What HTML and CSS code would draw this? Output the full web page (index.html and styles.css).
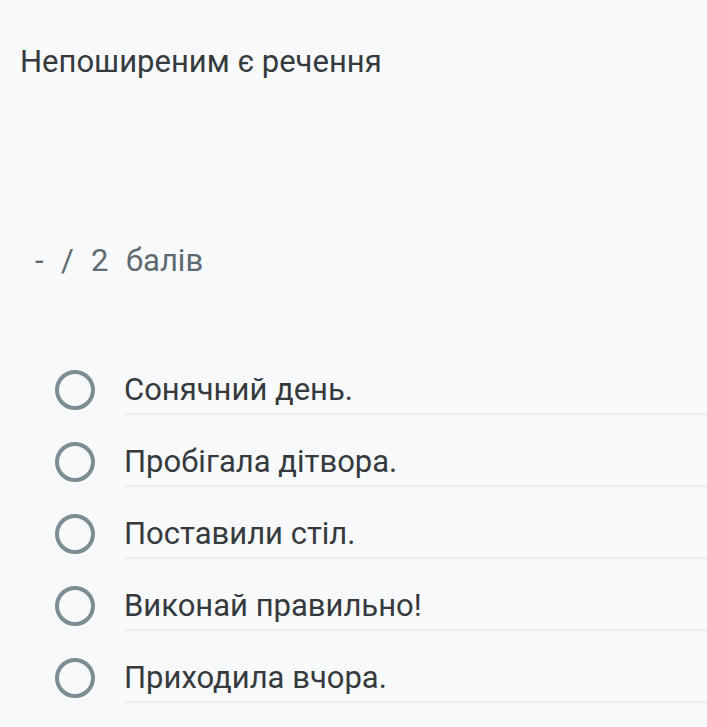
FILE: index.html
```html
<!DOCTYPE html>
<html lang="uk">
<head>
<meta charset="utf-8">
<link rel="stylesheet" href="styles.css">
</head>
<body>
<div class="page">
  <div class="question">Непоширеним є речення</div>
  <div class="score">-&nbsp; /&nbsp; 2&nbsp; балів</div>
  <ul class="options">
    <li class="option"><span class="radio"></span><span class="label">Сонячний день.</span></li>
    <li class="option"><span class="radio"></span><span class="label">Пробігала дітвора.</span></li>
    <li class="option"><span class="radio"></span><span class="label">Поставили стіл.</span></li>
    <li class="option"><span class="radio"></span><span class="label">Виконай правильно!</span></li>
    <li class="option"><span class="radio"></span><span class="label">Приходила вчора.</span></li>
  </ul>
</div>
</body>
</html>
```

FILE: styles.css
```css
html, body {
  margin: 0;
  padding: 0;
  background: #f8f9fb;
}
.page {
  width: 707px;
  height: 727px;
  overflow: hidden;
  font-family: Roboto, "Noto Sans", sans-serif;
  color: #353a3d;
}
.question {
  padding: 42px 0 0 20px;
  font-size: 31px;
  line-height: 40px;
}
.score {
  margin-top: 159px;
  padding-left: 35px;
  font-size: 31px;
  line-height: 40px;
  word-spacing: 1px;
  color: #5f6b70;
}
.options {
  list-style: none;
  margin: 89px 0 0 0;
  padding: 0;
}
.option {
  display: flex;
  align-items: stretch;
  height: 72px;
}
.radio {
  flex: none;
  box-sizing: border-box;
  width: 40px;
  height: 40px;
  margin: 0 29px 0 55px;
  border: 4px solid #7b8e94;
  border-radius: 50%;
}
.label {
  flex: 1;
  font-size: 31px;
  line-height: 40px;
  height: 43px;
  border-bottom: 2px solid #eceef1;
}
```
